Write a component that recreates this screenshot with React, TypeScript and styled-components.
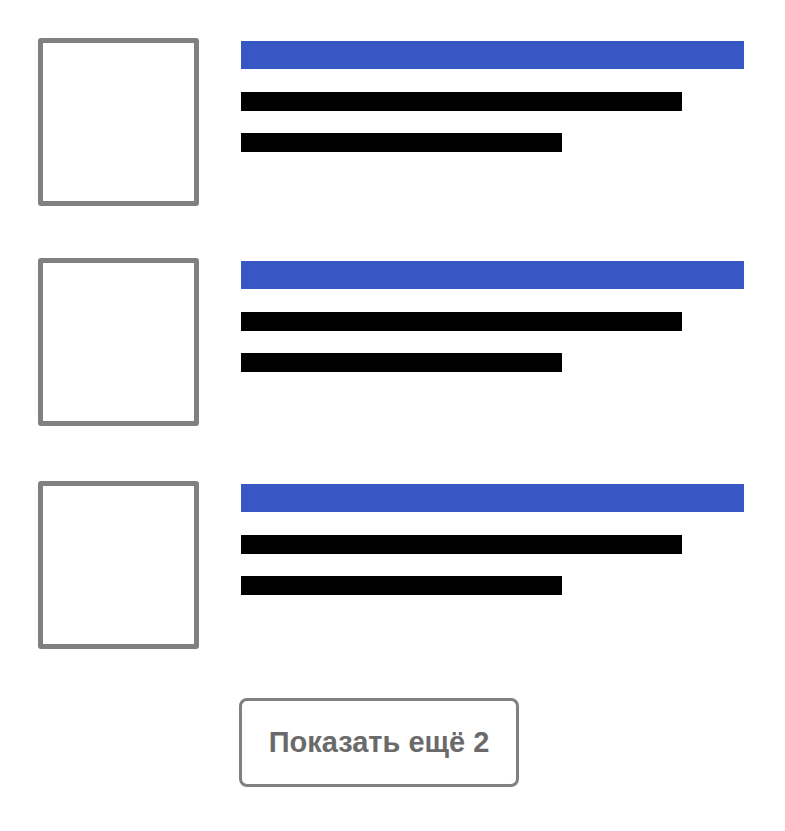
import styled, { createGlobalStyle } from "styled-components";

const GlobalStyle = createGlobalStyle`
  body {
    margin: 0;
    background: #ffffff;
    font-family: "Liberation Sans", Arial, sans-serif;
  }
`;

const Page = styled.div`
  display: flex;
  flex-direction: column;
  padding: 38px 0 0 38px;
`;

const Item = styled.div<{ $after: number }>`
  display: flex;
  gap: 42px;
  margin-bottom: ${(p) => p.$after}px;
`;

const Thumb = styled.div`
  box-sizing: border-box;
  width: 161px;
  height: 168px;
  border: 5px solid #808080;
  border-radius: 3px;
  flex-shrink: 0;
`;

const Lines = styled.div`
  display: flex;
  flex-direction: column;
  padding-top: 3px;
`;

const Title = styled.div`
  width: 503px;
  height: 28px;
  background: #3758c4;
`;

const Line = styled.div<{ $width: number; $top: number }>`
  width: ${(p) => p.$width}px;
  height: 19px;
  margin-top: ${(p) => p.$top}px;
  background: #000000;
`;

const MoreButton = styled.button`
  box-sizing: border-box;
  width: 280px;
  height: 89px;
  margin-left: 201px;
  padding: 0;
  border: 3px solid #808080;
  border-radius: 8px;
  background: #ffffff;
  color: #6a6a6a;
  font-family: "Liberation Sans", Arial, sans-serif;
  font-size: 29px;
  font-weight: bold;
  cursor: pointer;
`;

const gaps = [52, 55, 49];

export default function App() {
  return (
    <>
      <GlobalStyle />
      <Page>
        {gaps.map((g, i) => (
          <Item key={i} $after={g}>
            <Thumb />
            <Lines>
              <Title />
              <Line $width={441} $top={23} />
              <Line $width={321} $top={22} />
            </Lines>
          </Item>
        ))}
        <MoreButton>Показать ещё 2</MoreButton>
      </Page>
    </>
  );
}
